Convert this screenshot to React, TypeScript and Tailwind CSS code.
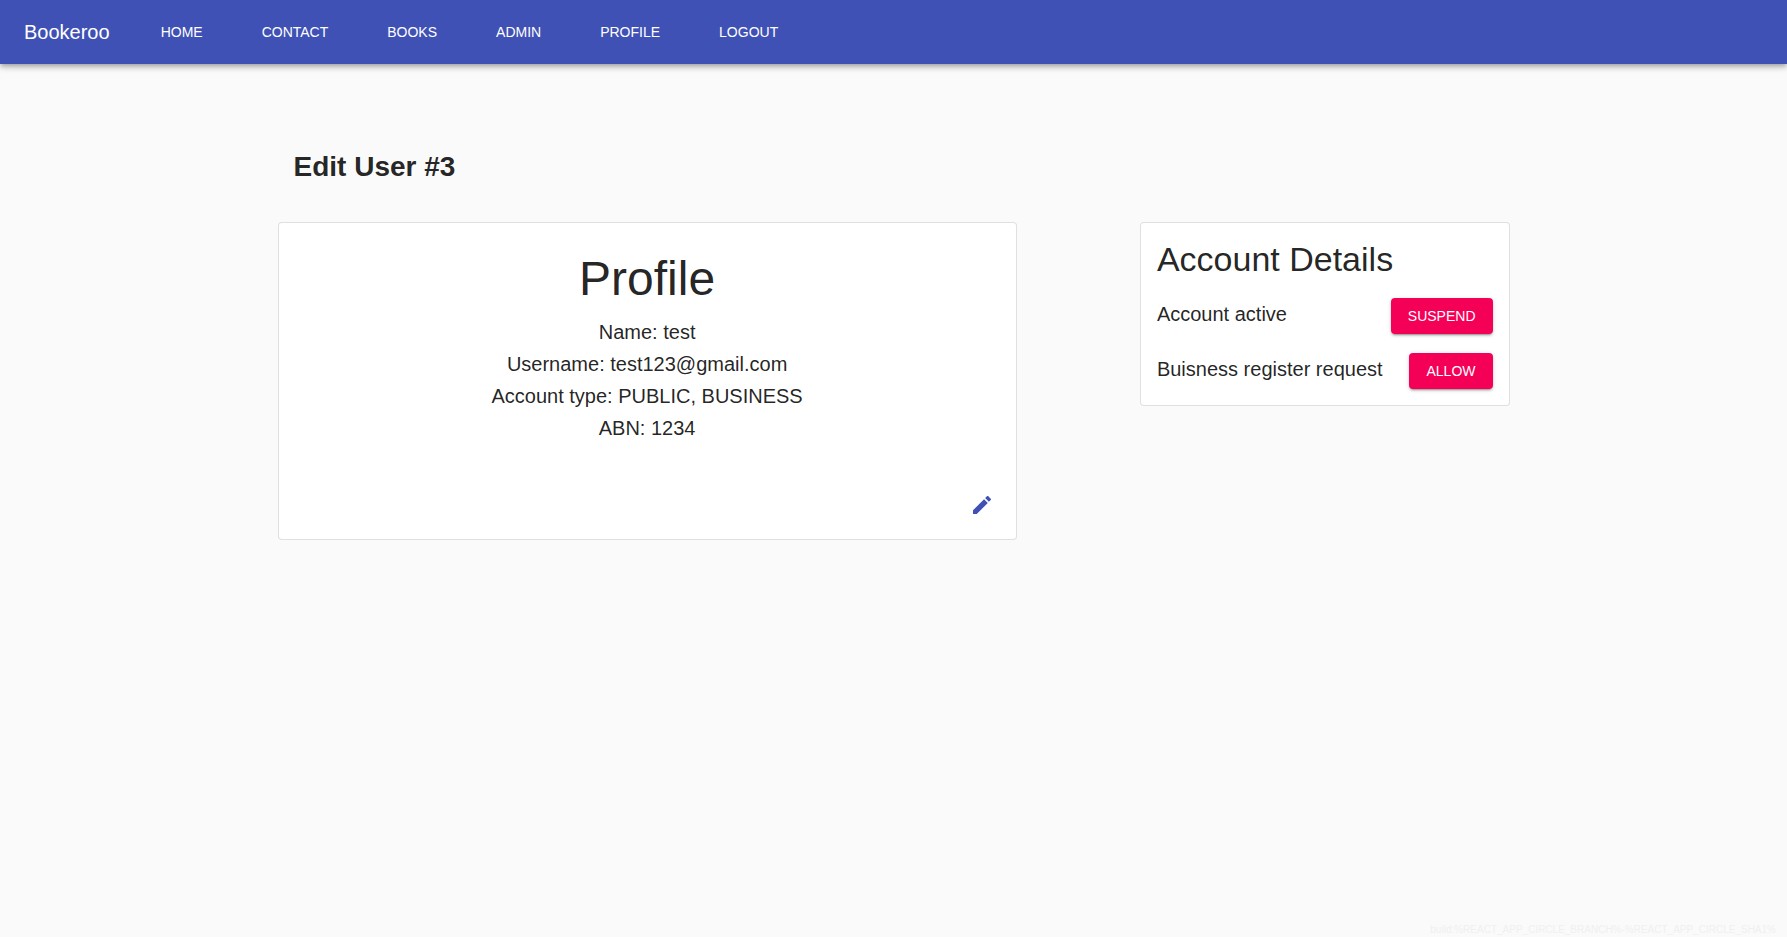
const navItems = ['Home', 'Contact', 'Books', 'Admin', 'Profile', 'Logout'];

const profileLines = [
  'Name: test',
  'Username: test123@gmail.com',
  'Account type: PUBLIC, BUSINESS',
  'ABN: 1234',
];

const accountActions = [
  { label: 'Account active', action: 'Suspend' },
  { label: 'Buisness register request', action: 'Allow' },
];

function NavBar() {
  return (
    <header className="flex h-16 items-center bg-[#3f51b5] px-6 text-white shadow-[0_2px_4px_-1px_rgba(0,0,0,0.2),0_4px_5px_0_rgba(0,0,0,0.14),0_1px_10px_0_rgba(0,0,0,0.12)]">
      <a href="#home" className="text-xl">
        Bookeroo
      </a>
      <nav className="ml-[43px] flex gap-[43px]">
        {navItems.map((item) => (
          <a key={item} href={`#${item.toLowerCase()}`} className="px-2 py-1.5 text-sm leading-6 uppercase">
            {item}
          </a>
        ))}
      </nav>
    </header>
  );
}

function EditIcon() {
  return (
    <svg viewBox="0 0 24 24" className="size-6 fill-current" aria-hidden="true">
      <path d="M3 17.25V21h3.75L17.81 9.94l-3.75-3.75L3 17.25zM20.71 7.04c.39-.39.39-1.02 0-1.41l-2.34-2.34c-.39-.39-1.02-.39-1.41 0l-1.83 1.83 3.75 3.75 1.83-1.83z" />
    </svg>
  );
}

function ProfileCard() {
  return (
    <section className="w-3/5 rounded border border-black/12 bg-white px-2.5 pt-7 pb-2.5 text-center">
      <h2 className="text-5xl leading-14">Profile</h2>
      <div className="mt-[9px] text-xl leading-8">
        {profileLines.map((line) => (
          <p key={line}>{line}</p>
        ))}
      </div>
      <div className="mt-[37px] flex justify-end">
        <button type="button" aria-label="Edit profile" className="rounded-full p-3 text-[#3f51b5]">
          <EditIcon />
        </button>
      </div>
    </section>
  );
}

function AccountCard() {
  return (
    <section className="w-[30%] rounded border border-black/12 bg-white p-4">
      <h2 className="text-[34px] leading-10">Account Details</h2>
      <div className="mt-[19px] flex flex-col gap-[19px]">
        {accountActions.map(({ label, action }) => (
          <div key={label} className="flex items-start justify-between">
            <p className="text-xl leading-8">{label}</p>
            <button
              type="button"
              className="rounded bg-[#f50057] px-[17px] py-1.5 text-sm leading-6 text-white uppercase shadow-[0_3px_1px_-2px_rgba(0,0,0,0.2),0_2px_2px_0_rgba(0,0,0,0.14),0_1px_5px_0_rgba(0,0,0,0.12)]"
            >
              {action}
            </button>
          </div>
        ))}
      </div>
    </section>
  );
}

export default function App() {
  return (
    <div className="flex min-h-screen flex-col bg-[#fafafa] font-['Liberation_Sans',Arial,sans-serif] text-black/87">
      <NavBar />
      <main className="mx-auto w-full max-w-[1280px] grow px-6 pt-20">
        <h1 className="px-4 text-[28px] leading-[46px] font-bold">Edit User #3</h1>
        <div className="mt-8 flex items-start justify-between">
          <ProfileCard />
          <AccountCard />
        </div>
      </main>
      <footer className="px-[11px] text-right text-[10px] leading-[14px] text-[#f0f0f0]">
        build:%REACT_APP_CIRCLE_BRANCH%-%REACT_APP_CIRCLE_SHA1%
      </footer>
    </div>
  );
}
